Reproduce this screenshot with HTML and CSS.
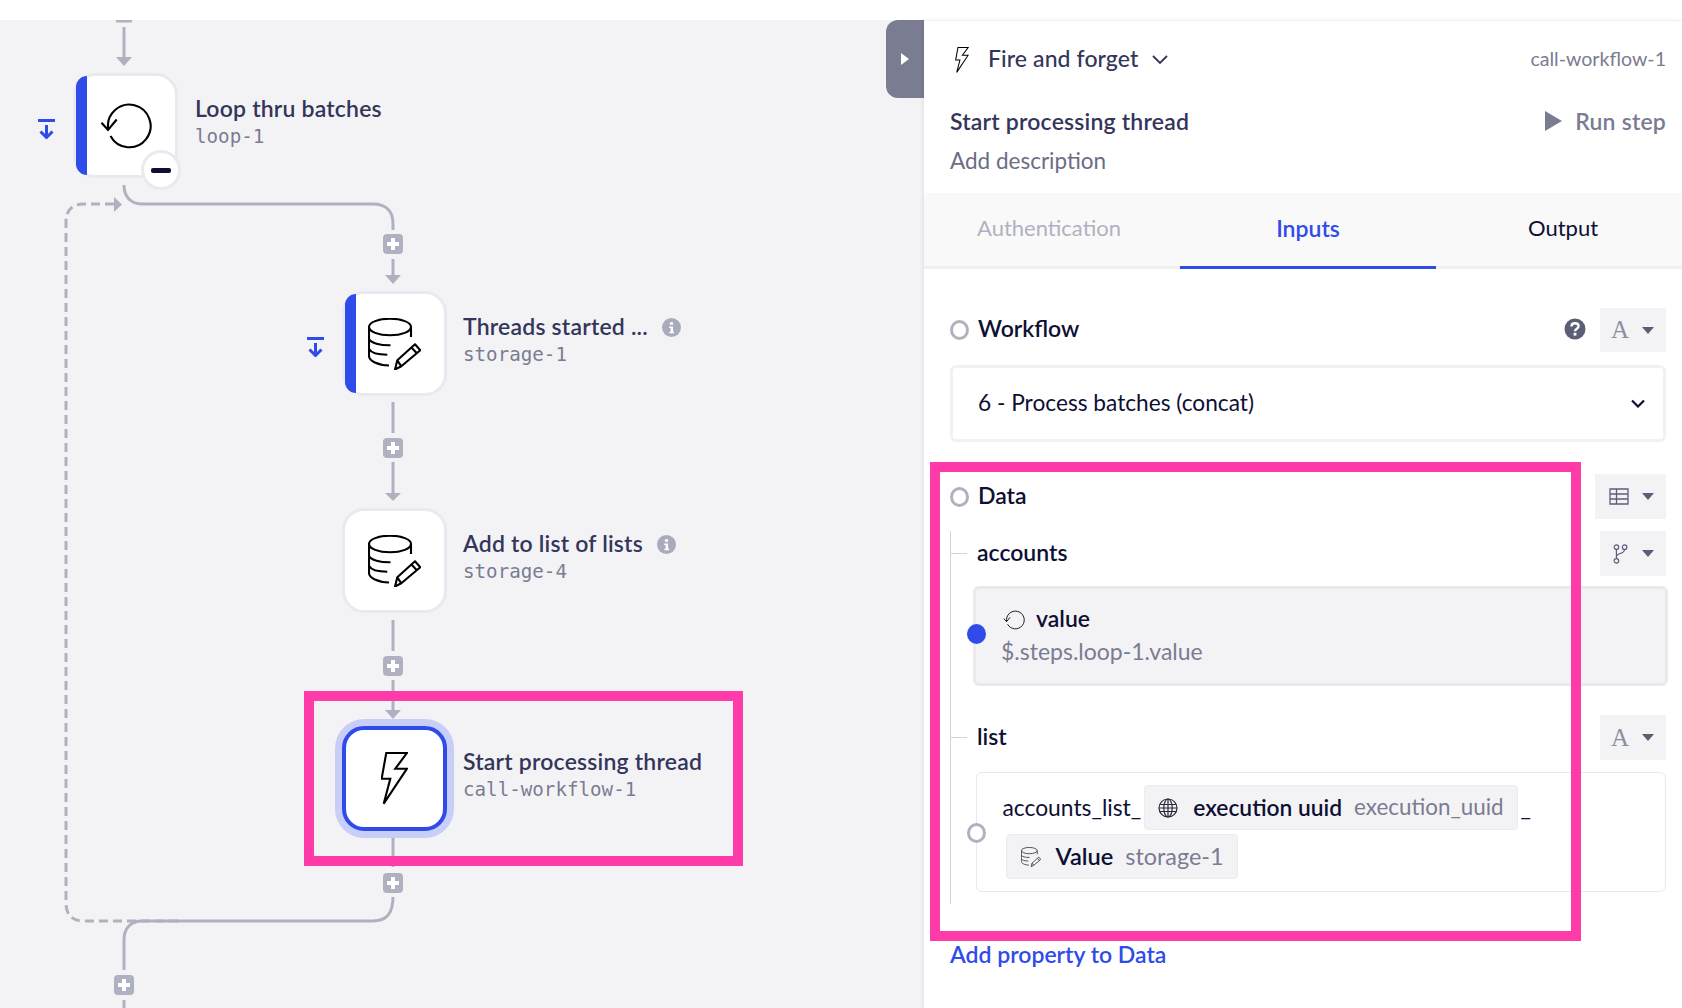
FILE: index.html
```html
<!DOCTYPE html>
<html lang="en">
<head>
  <meta charset="UTF-8">
  <meta name="viewport" content="width=device-width, initial-scale=1.0">
  <title>Workflow builder</title>
  <link rel="stylesheet" href="styles.css">
</head>
<body>
  <svg class="icon-defs" width="0" height="0">
    <symbol id="i-loop" viewBox="0 0 52 48">
      <path d="M10.5 34A21.3 21.3 0 1 0 8.3 27.6M1.500 20.700L8 28L16.700 17.500" fill="none" stroke="currentColor" stroke-width="2.1"/>
    </symbol>
    <symbol id="i-db" viewBox="0 0 53 52">
      <g fill="none" stroke="currentColor" stroke-width="2.1" stroke-linejoin="round">
        <ellipse cx="22" cy="9" rx="21" ry="8.3"/>
        <path d="M43 9V19M1 9V38C1 43 10 47 21 47.5M1 21C3 25 12 27.5 22.5 27.3M1 31C3 34.5 10 36.7 19.3 36.7"/>
        <path d="M27 51.5L29.3 42.3L47 26.3L52.3 32.3L33.3 48.3ZM29.3 42.3L33.3 48.3M43.7 29.7L49.3 35.7"/>
      </g>
    </symbol>
    <symbol id="i-bolt" viewBox="0 0 27 53">
      <path d="M5.3 .9H26L14.3 16.7H26L2.7 51.7L9.3 26.7H.6Z" fill="none" stroke="currentColor" stroke-width="2.1"/>
    </symbol>
    <symbol id="i-collapse" viewBox="0 0 17 20">
      <path d="M0 1.5H17M8.500 6V18M2.500 12.500L8.500 18.500L14.500 12.500" fill="none" stroke="currentColor" stroke-width="3"/>
    </symbol>
    <symbol id="i-info" viewBox="0 0 18 18">
      <circle cx="9" cy="9" r="9" fill="currentColor"/>
      <path d="M7.500 4h3v2.500h-3zM6.800 8h3.700v5h1v1.500H7V13h1.200V9.500H6.800z" fill="#fff"/>
    </symbol>
  </svg>

  <div class="top-bar"></div>

  <div class="app">
    <!-- Left: flow diagram -->
    <div class="canvas">
      <svg class="wires" viewBox="0 20 924 988" width="924" height="988">
        <g fill="none" stroke="#b0b1c0" stroke-width="3">
          <path d="M116 21H132M124 27V58"/>
          <path d="M124 185C124 197 131 204 142 204H373C386 204 393 211 393 224V230"/>
          <path d="M393 259V276M393 402V433M393 462V494M393 620V651M393 680V711M393 838V867"/>
          <path d="M393 897C393 913 387 921 373 921H142C131 921 124 928 124 940V970M124 1000V1008"/>
          <path d="M114 204H84C72 204 66 210 66 222V903C66 915 72 921 84 921H180" stroke-dasharray="9 5"/>
        </g>
        <g fill="#b0b1c0">
          <path d="M116 57H132L124 66Z"/>
          <path d="M385 275H401L393 284Z"/>
          <path d="M385 493H401L393 501Z"/>
          <path d="M385 710H401L393 719Z"/>
          <path d="M114 197L122 204.500L114 212Z"/>
          <g class="plus"><rect x="383" y="234" width="20" height="20" rx="4"/><path d="M391 238h4v4h4v4h-4v4h-4v-4h-4v-4h4z" fill="#fff"/></g>
          <g class="plus"><rect x="383" y="438" width="20" height="20" rx="4"/><path d="M391 442h4v4h4v4h-4v4h-4v-4h-4v-4h4z" fill="#fff"/></g>
          <g class="plus"><rect x="383" y="656" width="20" height="20" rx="4"/><path d="M391 660h4v4h4v4h-4v4h-4v-4h-4v-4h4z" fill="#fff"/></g>
          <g class="plus"><rect x="383" y="873" width="20" height="20" rx="4"/><path d="M391 877h4v4h4v4h-4v4h-4v-4h-4v-4h4z" fill="#fff"/></g>
          <g class="plus"><rect x="114" y="975" width="20" height="20" rx="4"/><path d="M122 979h4v4h4v4h-4v4h-4v-4h-4v-4h4z" fill="#fff"/></g>
        </g>
      </svg>

      <div class="step step-loop">
        <svg class="collapse"><use href="#i-collapse"/></svg>
        <div class="node has-stripe">
          <svg class="node-icon icon-loop"><use href="#i-loop"/></svg>
          <span class="minus-badge"><i></i></span>
        </div>
        <div class="step-text">
          <div class="step-title">Loop thru batches</div>
          <div class="step-id">loop-1</div>
        </div>
      </div>

      <div class="step step-threads">
        <svg class="collapse"><use href="#i-collapse"/></svg>
        <div class="node has-stripe">
          <svg class="node-icon icon-db"><use href="#i-db"/></svg>
        </div>
        <div class="step-text">
          <div class="step-title">Threads started ... <svg class="info"><use href="#i-info"/></svg></div>
          <div class="step-id">storage-1</div>
        </div>
      </div>

      <div class="step step-add">
        <div class="node">
          <svg class="node-icon icon-db"><use href="#i-db"/></svg>
        </div>
        <div class="step-text">
          <div class="step-title">Add to list of lists <svg class="info"><use href="#i-info"/></svg></div>
          <div class="step-id">storage-4</div>
        </div>
      </div>

      <div class="step step-start">
        <div class="node selected">
          <svg class="node-icon icon-bolt"><use href="#i-bolt"/></svg>
        </div>
        <div class="step-text">
          <div class="step-title">Start processing thread</div>
          <div class="step-id">call-workflow-1</div>
        </div>
      </div>

      <div class="highlight highlight-node"></div>
      <div class="panel-handle"><i></i></div>
    </div>

    <!-- Right: step settings -->
    <div class="panel">
      <div class="panel-head">
        <div class="head-row type-row">
          <svg class="type-icon"><use href="#i-bolt"/></svg>
          <span class="type-name">Fire and forget</span>
          <svg class="type-chevron" viewBox="0 0 16 9"><path d="M1 1L8 8L15 1" fill="none" stroke="currentColor" stroke-width="1.8"/></svg>
          <span class="type-id">call-workflow-1</span>
        </div>
        <div class="head-row name-row">
          <span class="name">Start processing thread</span>
          <span class="run"><i class="run-arrow"></i>Run step</span>
        </div>
        <div class="description">Add description</div>
      </div>

      <div class="tabs">
        <div class="tab tab-first">Authentication</div>
        <div class="tab active">Inputs</div>
        <div class="tab tab-last">Output</div>
      </div>

      <div class="form">
        <div class="field-row first">
          <span class="radio"></span>
          <span class="label">Workflow</span>
          <svg class="help" viewBox="0 0 22 22">
            <circle cx="11" cy="11" r="10.500" fill="#5c5e78"/>
            <path d="M7.500 8.500C7.500 6.500 9 5.300 11 5.300C13 5.300 14.600 6.500 14.600 8.300C14.600 10.800 11 10.800 11 13.200" fill="none" stroke="#fff" stroke-width="2.400"/>
            <rect x="9.600" y="14.800" width="2.800" height="2.800" fill="#fff"/>
          </svg>
          <div class="type-btn"><span class="glyph-a">A</span><i class="caret"></i></div>
        </div>

        <div class="select">
          <span>6 - Process batches (concat)</span>
          <svg class="select-chevron" viewBox="0 0 14 9"><path d="M1 1.500L7 7.500L13 1.500" fill="none" stroke="currentColor" stroke-width="2.200"/></svg>
        </div>

        <div class="field-row data-row">
          <span class="radio"></span>
          <span class="label">Data</span>
          <div class="type-btn wide">
            <svg class="btn-icon" viewBox="0 0 20 17"><path d="M1 1H19V16H1ZM1 6H19M1 11H19M7.500 1V16" fill="none" stroke="currentColor" stroke-width="1.300"/></svg>
            <i class="caret"></i>
          </div>
        </div>

        <div class="tree">
          <div class="tree-row">
            <i class="tick"></i>
            <span class="label">accounts</span>
            <div class="type-btn">
              <svg class="btn-icon branch" viewBox="0 0 16 22"><g fill="none" stroke="currentColor" stroke-width="1.300"><circle cx="3.500" cy="3.500" r="2.500"/><circle cx="12.500" cy="3.500" r="2.500"/><circle cx="3.500" cy="18.500" r="2.500"/><path d="M3.500 6V16M12.500 6C12.500 11 3.500 10 3.500 14"/></g></svg>
              <i class="caret"></i>
            </div>
          </div>

          <div class="ref-card">
            <span class="dot"></span>
            <div class="ref-title">
              <svg class="ref-icon"><use href="#i-loop"/></svg>
              <span class="label">value</span>
            </div>
            <div class="ref-path">$.steps.loop-1.value</div>
          </div>

          <div class="tree-row list-row">
            <i class="tick"></i>
            <span class="label">list</span>
            <div class="type-btn"><span class="glyph-a">A</span><i class="caret"></i></div>
          </div>

          <div class="input-box">
            <span class="radio box-radio"></span>
            <span class="plain">accounts_list_</span>
            <span class="chip">
              <svg class="chip-icon" viewBox="0 0 20 20"><g fill="none" stroke="currentColor" stroke-width="1.200"><circle cx="10" cy="10" r="9"/><ellipse cx="10" cy="10" rx="4.200" ry="9"/><path d="M10 1V19M1.800 6.500H18.200M1.800 13.500H18.200M1 10H19"/></g></svg>
              <b>execution uuid</b><em>execution_uuid</em>
            </span>
            <span class="plain">_</span>
            <span class="chip chip-second">
              <svg class="chip-icon"><use href="#i-db"/></svg>
              <b>Value</b><em>storage-1</em>
            </span>
          </div>
        </div>

        <div class="add-property">Add property to Data</div>
      </div>

      <div class="highlight highlight-form"></div>
    </div>
  </div>
</body>
</html>
```

FILE: styles.css
```css
* {
  box-sizing: border-box;
}

html, body {
  margin: 0;
  height: 1008px;
  overflow: hidden;
}

body {
  font-family: "Lato", "Noto Sans", sans-serif;
  color: #0d1033;
  background: #fff;
}

.icon-defs {
  position: absolute;
}

.top-bar {
  height: 20px;
  background: #fff;
}

.app {
  display: flex;
  height: 988px;
}

/* Left: flow diagram */
.canvas {
  position: relative;
  flex: 0 0 924px;
  background: #f3f3f6;
  overflow: hidden;
}

.wires {
  position: absolute;
  left: 0;
  top: 0;
}

.step {
  position: absolute;
  display: flex;
  align-items: center;
  gap: 16px;
}

.step-loop { left: 73px; top: 53px; gap: 17px; }
.step-threads { left: 342px; top: 271px; }
.step-add { left: 342px; top: 488px; }
.step-start { left: 342px; top: 706px; }

.node {
  position: relative;
  flex: none;
  display: flex;
  align-items: center;
  justify-content: center;
  width: 105px;
  height: 105px;
  background: #fff;
  border: 3px solid #e9e9ef;
  border-radius: 22px;
}

.node.has-stripe::before {
  content: "";
  position: absolute;
  left: 0;
  top: 0;
  bottom: 0;
  width: 11px;
  background: #2f4bea;
  border-radius: 19px 0 0 19px / 19px 0 0 19px;
}

.node.selected {
  border: 4px solid #2f4bea;
  box-shadow: 0 0 0 7px #c8cef8;
}

.node-icon {
  color: #000;
}

.icon-loop { width: 52px; height: 48px; }
.icon-db { width: 53px; height: 52px; }
.icon-bolt { width: 27px; height: 53px; }

.minus-badge {
  position: absolute;
  right: -6px;
  bottom: -15px;
  display: flex;
  align-items: center;
  justify-content: center;
  width: 40px;
  height: 40px;
  background: #fff;
  border: 3px solid #e9e9ef;
  border-radius: 50%;
}

.minus-badge i {
  width: 20px;
  height: 5px;
  background: #0d1033;
  border-radius: 2px;
}

.collapse {
  position: absolute;
  left: -35px;
  top: 46px;
  width: 17px;
  height: 20px;
  color: #2f4bea;
}

.step-text {
  margin-top: -6px;
  white-space: nowrap;
}

.step-title {
  display: flex;
  align-items: center;
  height: 27px;
  padding-bottom: 3px;
  font-size: 23px;
  font-weight: 600;
  letter-spacing: 0.2px;
  color: #33365a;
}

.step-id {
  height: 27px;
  line-height: 27px;
  font-family: "DejaVu Sans Mono", "Liberation Mono", monospace;
  font-size: 19.2px;
  color: #7a7c92;
}

.info {
  width: 19px;
  height: 19px;
  margin-left: 14px;
  margin-top: 3px;
  color: #a9aabb;
}

.panel-handle {
  position: absolute;
  right: 0;
  top: 0;
  display: flex;
  align-items: center;
  justify-content: center;
  width: 38px;
  height: 78px;
  background: #7a7c92;
  border-radius: 12px 0 0 12px;
}

.panel-handle i {
  border-left: 8px solid #fff;
  border-top: 6px solid transparent;
  border-bottom: 6px solid transparent;
}

.highlight {
  position: absolute;
  border: 10px solid #ff3baa;
  pointer-events: none;
}

.highlight-node {
  left: 304px;
  top: 671px;
  width: 439px;
  height: 175px;
}

.highlight-form {
  left: 6px;
  top: 441px;
  width: 651px;
  height: 479px;
}

/* Right: step settings */
.panel {
  position: relative;
  flex: 1;
  background: #fff;
  border-top: 1px solid #f1f1f4;
  box-shadow: -2px 0 3px rgba(20, 20, 60, 0.06);
}

.panel-head {
  padding: 0 16px 15px 26px;
}

.head-row {
  display: flex;
  align-items: center;
}

.type-row {
  height: 77px;
}

.type-icon {
  width: 14px;
  height: 26px;
  margin-left: 5px;
  color: #000;
}

.type-name {
  margin-left: 19px;
  padding-bottom: 3px;
  font-size: 23px;
  font-weight: 500;
  letter-spacing: 0.1px;
  color: #33365a;
}

.type-chevron {
  width: 16px;
  height: 9px;
  margin-left: 14px;
  color: #33365a;
}

.type-id {
  margin-left: auto;
  padding-bottom: 3px;
  font-size: 19.6px;
  color: #7a7c92;
}

.name-row {
  justify-content: space-between;
  height: 48px;
}

.name {
  padding-bottom: 2px;
  font-size: 23px;
  font-weight: 600;
  letter-spacing: 0.2px;
  color: #33365a;
}

.run {
  display: flex;
  align-items: center;
  padding-bottom: 2px;
  font-size: 23px;
  font-weight: 600;
  letter-spacing: 0.2px;
  color: #7a7c92;
}

.run-arrow {
  margin-right: 13px;
  border-left: 17px solid #7a7c92;
  border-top: 10px solid transparent;
  border-bottom: 10px solid transparent;
}

.description {
  height: 32px;
  padding-bottom: 2px;
  line-height: 30px;
  font-size: 22.5px;
  color: #6b6d85;
}

.tabs {
  display: grid;
  grid-template-columns: 256px 256px 1fr;
  height: 76px;
  background: #f9f9fa;
}

.tab {
  display: flex;
  align-items: center;
  justify-content: center;
  padding-bottom: 4px;
  font-size: 22px;
  border-bottom: 3px solid #f0f0f3;
}

.tab-first {
  padding-right: 6px;
  color: #b0b1c0;
}

.tab-last {
  padding-left: 8px;
}

.tab.active {
  font-size: 23px;
  font-weight: 600;
  color: #2f4bea;
  border-bottom-color: #2f4bea;
}

.form {
  padding: 39px 16px 0 26px;
}

.field-row,
.tree-row {
  display: flex;
  align-items: center;
}

.radio {
  flex: none;
  width: 19px;
  height: 20px;
  margin-right: 9px;
  background: #fff;
  border: 3px solid #b0b1c0;
  border-radius: 50%;
}

.label {
  padding-bottom: 4px;
  font-size: 23px;
  font-weight: 600;
}

.help {
  width: 22px;
  height: 22px;
  margin: -2px 14px 0 auto;
}

.type-btn {
  display: flex;
  align-items: center;
  justify-content: space-between;
  width: 66px;
  height: 45px;
  margin-left: auto;
  padding: 0 12px 0 11px;
  background: #f3f3f6;
}

.help + .type-btn {
  height: 44px;
  margin-left: 0;
}

.type-btn.wide {
  width: 71px;
  padding-left: 14px;
}

.glyph-a {
  font-family: "Liberation Serif", serif;
  font-size: 25px;
  color: #8c8ea2;
}

.caret {
  border-top: 7px solid #5c5e78;
  border-left: 6px solid transparent;
  border-right: 6px solid transparent;
}

.btn-icon {
  width: 20px;
  height: 17px;
  color: #5c5e78;
}

.btn-icon.branch {
  width: 15px;
  height: 20px;
  margin-left: 2px;
}

.select {
  display: flex;
  align-items: center;
  justify-content: space-between;
  height: 77px;
  margin-top: 13px;
  padding: 0 18px 2px 25px;
  font-size: 22.7px;
  border: 3px solid #f1f1f4;
  border-radius: 6px;
}

.select-chevron {
  width: 14px;
  height: 9px;
  margin-top: 2px;
}

.data-row {
  margin-top: 32px;
}

.tree {
  margin-top: 12px;
  padding-bottom: 12px;
  border-left: 1.5px solid #d4d4dc;
}

.tick {
  flex: none;
  width: 16px;
  height: 1.5px;
  margin-right: 10px;
  background: #d4d4dc;
}

.ref-card {
  position: relative;
  height: 100px;
  margin: 10px -2px 0 22px;
  padding: 16px 0 0 25px;
  background: #f3f3f6;
  border: 3px solid #e9e9ee;
  border-radius: 6px;
}

.dot {
  position: absolute;
  left: -9px;
  top: 35px;
  width: 19px;
  height: 20px;
  background: #2f4bea;
  border-radius: 50%;
}

.ref-title {
  display: flex;
  align-items: center;
  height: 30px;
}

.ref-icon {
  width: 22px;
  height: 20px;
  margin: 0 11px 0 2px;
  color: #000;
}

.ref-path {
  height: 30px;
  margin-top: 1px;
  line-height: 30px;
  font-size: 23px;
  color: #7a7c92;
}

.list-row {
  margin-top: 29px;
}

.input-box {
  position: relative;
  display: flex;
  flex-wrap: wrap;
  align-items: center;
  gap: 4px 3px;
  height: 120px;
  margin: 12px 0 0 24.5px;
  padding: 12px 30px 0 26px;
  align-content: flex-start;
  border: 1.5px solid #eaeaee;
  border-radius: 6px;
}

.box-radio {
  position: absolute;
  left: -10px;
  top: 50px;
  margin: 0;
}

.plain {
  padding-bottom: 2px;
  font-size: 22.8px;
}

.chip {
  display: inline-flex;
  align-items: center;
  height: 45px;
  padding: 0 13px 2px 13px;
  font-size: 22.4px;
  background: #f3f3f6;
  border: 1px solid #ececf0;
  border-radius: 4px;
}

.chip b {
  margin-right: 12px;
  font-size: 22.8px;
  font-weight: 600;
}

.chip em {
  font-style: normal;
  color: #7a7c92;
}

.chip-icon {
  width: 20px;
  height: 20px;
  margin: 2px 15px 0 0;
  color: #2a2a3a;
}

.chip-second {
  margin-left: 3px;
  padding-left: 14px;
  font-size: 23.4px;
}

.chip-second b {
  font-size: 23.6px;
}

.add-property {
  height: 30px;
  margin-top: 35px;
  line-height: 30px;
  font-size: 23px;
  font-weight: 600;
  color: #2f4bea;
}
```
